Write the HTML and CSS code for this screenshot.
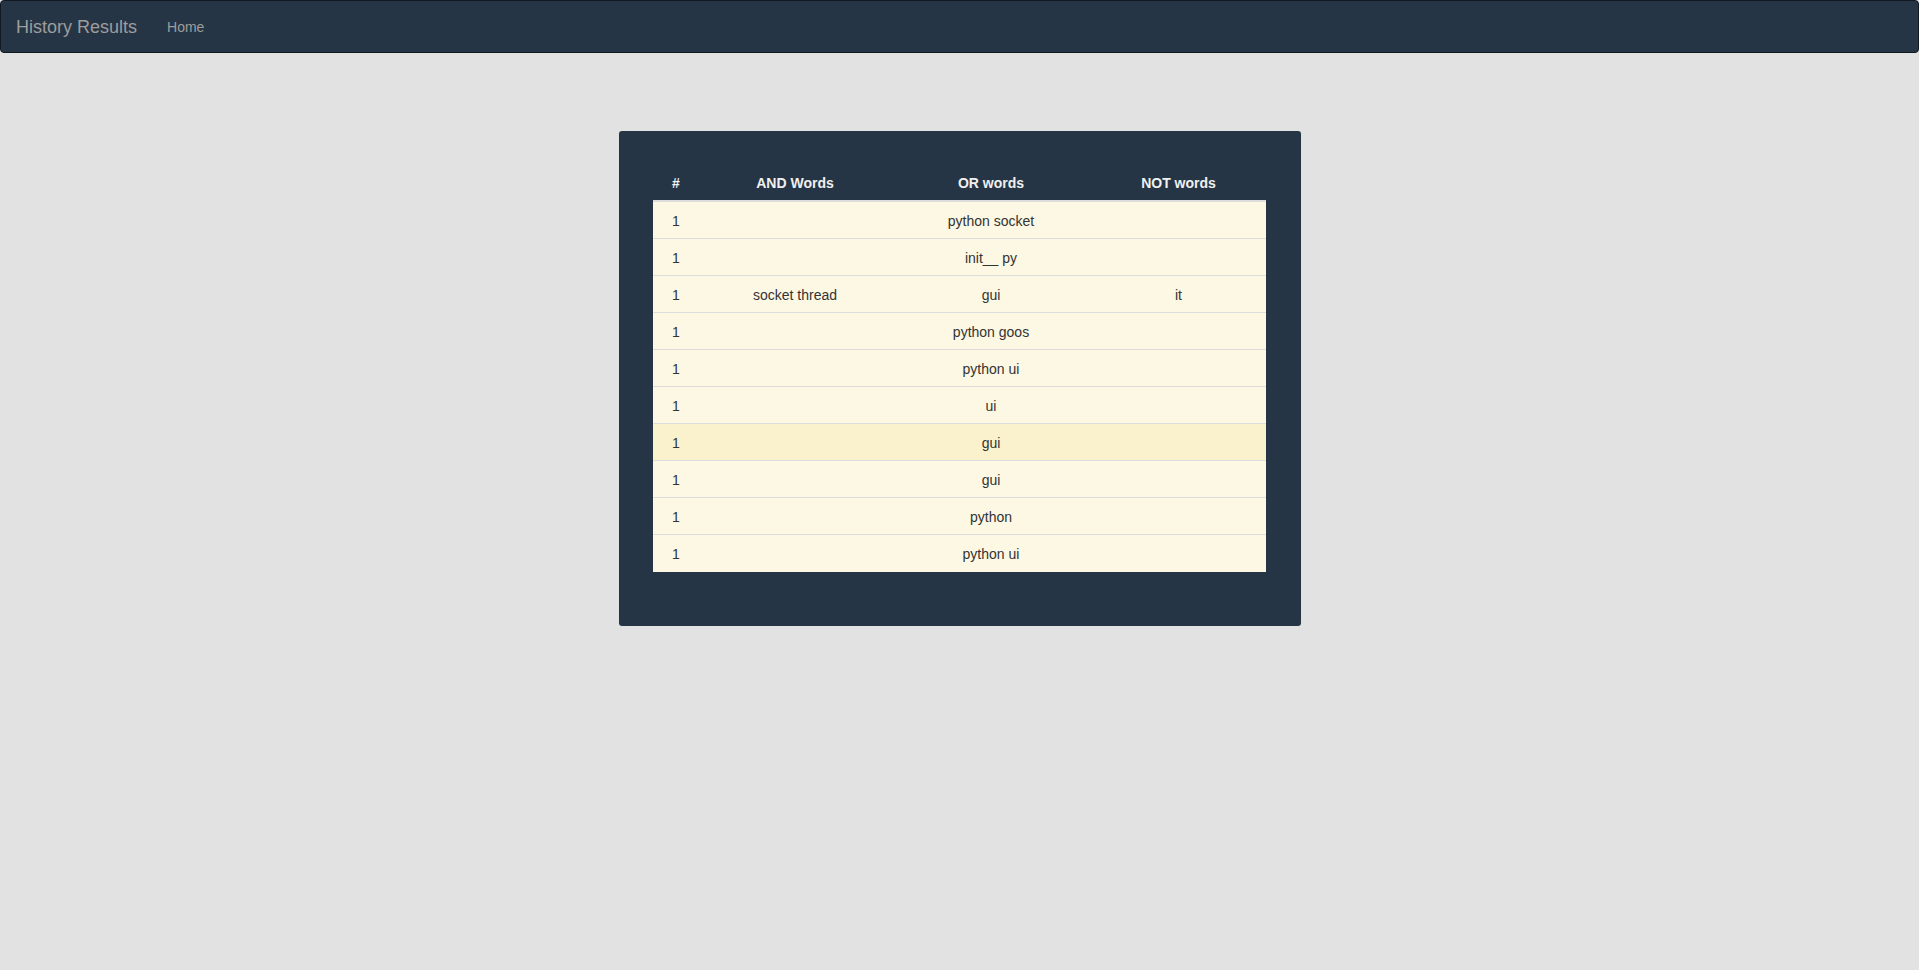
FILE: index.html
```html
<!DOCTYPE html>
<html>
<head>
<meta charset="utf-8">
<title>History Results</title>
<link rel="stylesheet" href="styles.css">
</head>
<body>
<nav class="navbar">
  <a class="brand" href="#">History Results</a>
  <a class="nav-link" href="#">Home</a>
</nav>
<main class="page">
  <section class="panel">
    <table class="results">
      <colgroup>
        <col class="c-num"><col class="c-and"><col class="c-or"><col class="c-not">
      </colgroup>
      <thead>
        <tr><th>#</th><th>AND Words</th><th>OR words</th><th>NOT words</th></tr>
      </thead>
      <tbody>
        <tr><td>1</td><td></td><td>python socket</td><td></td></tr>
        <tr><td>1</td><td></td><td>init__ py</td><td></td></tr>
        <tr><td>1</td><td>socket thread</td><td>gui</td><td>it</td></tr>
        <tr><td>1</td><td></td><td>python goos</td><td></td></tr>
        <tr><td>1</td><td></td><td>python ui</td><td></td></tr>
        <tr><td>1</td><td></td><td>ui</td><td></td></tr>
        <tr class="hover"><td>1</td><td></td><td>gui</td><td></td></tr>
        <tr><td>1</td><td></td><td>gui</td><td></td></tr>
        <tr><td>1</td><td></td><td>python</td><td></td></tr>
        <tr><td>1</td><td></td><td>python ui</td><td></td></tr>
      </tbody>
    </table>
  </section>
</main>
</body>
</html>
```

FILE: styles.css
```css
* { box-sizing: border-box; }
html, body { margin: 0; padding: 0; }
body {
  background: #e2e2e2;
  font-family: "Liberation Sans", Arial, Helvetica, sans-serif;
  font-size: 14px;
  line-height: 20px;
  color: #333;
}
.navbar {
  display: flex;
  align-items: center;
  height: 53px;
  background: #263545;
  border: 1px solid #111820;
  border-radius: 4px;
  padding-top: 1px;
}
.brand {
  display: block;
  padding: 15px;
  font-size: 18px;
  line-height: 20px;
  color: #9d9d9d;
  text-decoration: none;
}
.nav-link {
  display: block;
  padding: 15px;
  font-size: 14px;
  line-height: 20px;
  color: #9d9d9d;
  text-decoration: none;
}
.page {
  display: flex;
  justify-content: center;
  padding-top: 78px;
  padding-left: 1px;
}
.panel {
  width: 682px;
  background: #263545;
  border-radius: 3px;
  padding: 33px 35px 54px 34px;
}
.results {
  width: 613px;
  border-collapse: collapse;
  border-spacing: 0;
  table-layout: fixed;
}
.c-num { width: 46px; }
.c-and { width: 192px; }
.c-or { width: 200px; }
.c-not { width: 175px; }
.results th {
  padding: 9px 8px 7px;
  height: 37px;
  color: #f0f0f0;
  font-weight: bold;
  text-align: center;
  border-bottom: 2px solid #dddddd;
}
.results td {
  padding: 9px 8px 7px;
  height: 37px;
  text-align: center;
  background: #fcf8e3;
  border-top: 1px solid #dddddd;
  color: #333;
}
.results tr.hover td { background: #faf2cc; }
```
